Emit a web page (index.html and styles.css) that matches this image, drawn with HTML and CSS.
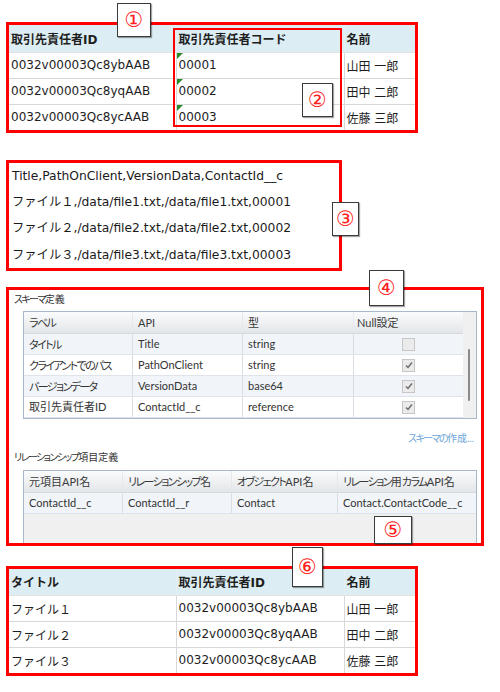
FILE: index.html
```html
<!DOCTYPE html>
<html lang="ja">
<head>
<meta charset="utf-8">
<link rel="stylesheet" href="styles.css">
</head>
<body>
<div class="page">
  <section class="sec sec1">
    <div class="redbox tbox tbox1">
      <table class="dt">
        <colgroup><col class="c1"><col class="c2"><col class="c3"></colgroup>
        <thead><tr><th>取引先責任者ID</th><th>取引先責任者コード</th><th>名前</th></tr></thead>
        <tbody>
          <tr><td>0032v00003Qc8ybAAB</td><td class="flag">00001</td><td>山田 一郎</td></tr>
          <tr><td>0032v00003Qc8yqAAB</td><td class="flag">00002</td><td>田中 二郎</td></tr>
          <tr class="last"><td>0032v00003Qc8ycAAB</td><td class="flag">00003</td><td>佐藤 三郎</td></tr>
        </tbody>
      </table>
    </div>
    <div class="hl2"></div>
    <div class="callout co1">①</div>
    <div class="callout co2">②</div>
  </section>

  <section class="sec sec3">
    <div class="redbox csv">
      <div class="csvline">Title,PathOnClient,VersionData,ContactId__c</div>
      <div class="csvline">ファイル１,/data/file1.txt,/data/file1.txt,00001</div>
      <div class="csvline">ファイル２,/data/file2.txt,/data/file2.txt,00002</div>
      <div class="csvline">ファイル３,/data/file3.txt,/data/file3.txt,00003</div>
    </div>
    <div class="callout co3">③</div>
  </section>

  <section class="sec sec4">
    <div class="redbox box4">
      <div class="panel">
        <div class="plabel"><span class="kn">スキーマ</span>定義</div>
        <div class="grid g1">
          <div class="gbody">
            <div class="grow ghead"><div><span class="kn">ラベル</span></div><div>API</div><div>型</div><div>Null設定</div></div>
            <div class="grow alt"><div><span class="kn">タイトル</span></div><div>Title</div><div>string</div><div class="center"><span class="cb"></span></div></div>
            <div class="grow"><div><span class="kn">クライアントでのパス</span></div><div>PathOnClient</div><div>string</div><div class="center"><span class="cb on"><svg viewBox="0 0 12 12" width="12" height="12"><polyline points="3,6.5 5,8.5 9,3.5" fill="none" stroke="#6d6d6d" stroke-width="1.5"/></svg></span></div></div>
            <div class="grow alt"><div><span class="kn">バージョンデータ</span></div><div>VersionData</div><div>base64</div><div class="center"><span class="cb on"><svg viewBox="0 0 12 12" width="12" height="12"><polyline points="3,6.5 5,8.5 9,3.5" fill="none" stroke="#6d6d6d" stroke-width="1.5"/></svg></span></div></div>
            <div class="grow"><div>取引先責任者ID</div><div>ContactId__c</div><div>reference</div><div class="center"><span class="cb on"><svg viewBox="0 0 12 12" width="12" height="12"><polyline points="3,6.5 5,8.5 9,3.5" fill="none" stroke="#6d6d6d" stroke-width="1.5"/></svg></span></div></div>
          </div>
          <div class="vscroll"><span class="thumb"></span></div>
        </div>
        <div class="mklink"><span class="kn">スキーマの</span>作成...</div>
        <div class="plabel plabel2"><span class="kn">リレーションシップ</span>項目定義</div>
        <div class="grid g2">
          <div class="gbody">
            <div class="grow ghead"><div>元項目API名</div><div><span class="kn">リレーションシップ</span>名</div><div><span class="kn">オブジェクト</span>API名</div><div><span class="kn">リレーション</span>用<span class="kn">カラム</span>API名</div></div>
            <div class="grow alt"><div>ContactId__c</div><div>ContactId__r</div><div>Contact</div><div>Contact.ContactCode__c</div></div>
          </div>
        </div>
      </div>
    </div>
    <div class="callout co4">④</div>
    <div class="callout co5">⑤</div>
  </section>

  <section class="sec sec6">
    <div class="redbox tbox tbox6">
      <table class="dt">
        <colgroup><col class="c1"><col class="c2"><col class="c3"></colgroup>
        <thead><tr><th>タイトル</th><th>取引先責任者ID</th><th>名前</th></tr></thead>
        <tbody>
          <tr><td>ファイル１</td><td>0032v00003Qc8ybAAB</td><td>山田 一郎</td></tr>
          <tr><td>ファイル２</td><td>0032v00003Qc8yqAAB</td><td>田中 二郎</td></tr>
          <tr><td>ファイル３</td><td>0032v00003Qc8ycAAB</td><td>佐藤 三郎</td></tr>
        </tbody>
      </table>
    </div>
    <div class="callout co6">⑥</div>
  </section>
</div>
</body>
</html>
```

FILE: styles.css
```css
* { box-sizing: border-box; }
html, body { margin: 0; padding: 0; background: #fff; }
body {
  font-family: "DejaVu Sans", "Noto Sans CJK JP", sans-serif;
  color: #1e1e1e;
  width: 500px;
  height: 692px;
  overflow: hidden;
}
.page { padding-left: 6px; }
.sec { position: relative; }
.redbox { border: 3px solid #ff0000; background: #fff; }

/* section 1 & 6 tables */
.sec1 { padding-top: 22px; }
.tbox { width: 412px; }
.dt {
  width: 406px;
  border-collapse: collapse;
  table-layout: fixed;
  font-size: 12px;
}
.dt col.c1 { width: 167px; }
.dt col.c2 { width: 168px; }
.dt col.c3 { width: 71px; }
.dt th {
  background: #dcedf3;
  height: 27px;
  padding: 0 0 0 2px;
  text-align: left;
  font-weight: bold;
  border-left: 1px solid #e6eef1;
  border-bottom: 1px solid #e2e2e2;
}
.dt td {
  height: 26px;
  padding: 0 0 0 2px;
  border-top: 1px solid #d8d8d8;
  border-left: 1px solid #d8d8d8;
  white-space: nowrap;
}
.dt th:first-child, .dt td:first-child { border-left: none; }
.dt td.flag { position: relative; }
.dt td.flag::before {
  content: "";
  position: absolute;
  left: 0;
  top: 0;
  border-top: 6px solid #2b8a2b;
  border-right: 6px solid transparent;
}
.tbox6 .dt th { height: 26px; }

.hl2 {
  position: absolute;
  left: 167px;
  top: 28px;
  width: 169px;
  height: 99px;
  border: 2px solid #ff0000;
}

.callout {
  position: absolute;
  background: #fff;
  border: 1px solid #3a3a3a;
  box-shadow: 1px 1px 1px rgba(0,0,0,0.35);
  color: #ff2020;
  font-family: "DejaVu Sans", "Noto Sans CJK JP", sans-serif;
  font-size: 21px;
  line-height: 1;
  display: flex;
  align-items: center;
  justify-content: center;
  z-index: 2;
}
.co1 { left: 111px; top: 3px; width: 34px; height: 34px; }
.co2 { left: 296px; top: 83px; width: 31px; height: 34px; }
.co3 { left: 326px; top: 42px; width: 27px; height: 34px; }
.co4 { left: 363px; top: -17px; width: 35px; height: 36px; }
.co5 { left: 368px; top: 229px; width: 38px; height: 28px; }
.co6 { left: 286px; top: -19px; width: 31px; height: 40px; }

/* section 3 csv */
.sec3 { margin-top: 27px; }
.csv {
  width: 336px;
  height: 111px;
  padding-left: 3px;
  font-size: 12.3px;
  line-height: 26.2px;
  color: #1a1a1a;
}
.csvline { white-space: nowrap; }

/* section 4 panel */
.sec4 { margin-top: 16px; }
.box4 {
  width: 478px;
  height: 259px;
  overflow: hidden;
}
.panel {
  padding: 0 4px;
  font-family: "Lato", "Noto Sans CJK JP", sans-serif;
  color: #333;
}
.kn {
  font-family: "Noto Sans CJK JP", sans-serif;
  font-feature-settings: "palt" 1;
  letter-spacing: -1.6px;
}
.plabel {
  margin-top: 2px;
  height: 14px;
  line-height: 14px;
  font-size: 10px;
  padding-left: 1px;
}
.plabel2 { margin-top: 5px; }
.grid {
  margin-left: 10px;
  width: 454px;
  border: 1px solid #a8b9cb;
  display: flex;
  margin-top: 5px;
  font-size: 11px;
}
.g2 { margin-top: 6px; height: 110px; background: #f0f0f0; }
.gbody { flex: 1; }
.grow {
  display: grid;
  height: 21px;
  border-bottom: 1px solid #dfe4ea;
  background: #fff;
}
.g1 .grow { grid-template-columns: 109px 110px 111px 109px; }
.g2 .grow { grid-template-columns: 99px 109px 106px 138px; }
.grow > div {
  border-right: 1px solid #d9dee4;
  padding-left: 5px;
  line-height: 20px;
  white-space: nowrap;
  overflow: hidden;
}
.g1 .grow > div:last-child, .g2 .grow > div:last-child { border-right: none; }
.grow.alt { background: #f1f5f9; }
.ghead {
  height: 22px;
  background: linear-gradient(#fafbfc, #e3e6e9);
  border-bottom: 1px solid #d6d9dd;
}
.ghead > div { border-right: 1px solid #e6e8eb; line-height: 21px; color: #3a3a3a; }
.g1 .ghead > div:last-child { padding-left: 3px; }
.grow > div.center {
  padding-left: 0;
  display: flex;
  align-items: center;
  justify-content: center;
}
.cb {
  display: block;
  width: 13px;
  height: 13px;
  border: 1px solid #c6c6c6;
  background: #ebebeb;
}
.cb svg { display: block; margin: -0.5px 0 0 -0.5px; }
.vscroll {
  width: 13px;
  background: #f0f0f0;
  position: relative;
}
.thumb {
  position: absolute;
  left: 5px;
  top: 37px;
  width: 2px;
  height: 52px;
  background: #8a8a8a;
  border-radius: 1px;
}
.mklink {
  margin-top: 12px;
  height: 14px;
  line-height: 14px;
  font-size: 10px;
  text-align: right;
  padding-right: 3px;
  color: #6ea6d8;
}

/* section 6 */
.sec6 { margin-top: 20px; }
```
